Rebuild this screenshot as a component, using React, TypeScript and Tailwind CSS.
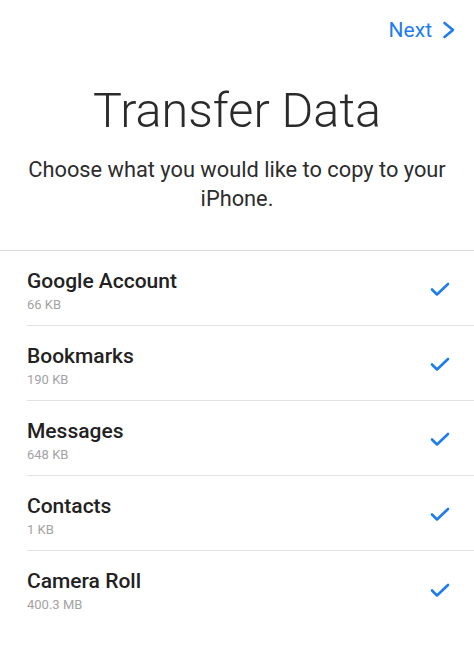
import React from 'react'

const items = [
  { name: 'Google Account', size: '66 KB' },
  { name: 'Bookmarks', size: '190 KB' },
  { name: 'Messages', size: '648 KB' },
  { name: 'Contacts', size: '1 KB' },
  { name: 'Camera Roll', size: '400.3 MB' },
]

function Check() {
  return (
    <svg width="20" height="16" viewBox="0 0 20 16" fill="none" className="shrink-0">
      <path d="M2 7.5 L7 12.5 L18 2" stroke="#1e7cf0" strokeWidth="2.6" strokeLinecap="round" strokeLinejoin="round" />
    </svg>
  )
}

export default function App() {
  return (
    <div className="w-[474px] h-[647px] bg-white overflow-hidden" style={{ fontFamily: 'Roboto, "Noto Sans", sans-serif' }}>
      {/* Top bar */}
      <div className="h-[60px] flex items-center justify-end pr-[18px]">
        <button className="flex items-center gap-[10px] text-[21px] text-[#1e7cf0] leading-none">
          <span>Next</span>
          <svg width="14" height="18" viewBox="0 0 14 18" fill="none">
            <path d="M2.5 2 L11 9 L2.5 16" stroke="#1e7cf0" strokeWidth="2.6" strokeLinecap="round" strokeLinejoin="round" />
          </svg>
        </button>
      </div>

      {/* Heading */}
      <h1 className="mt-[21px] text-center text-[48.5px] font-light leading-[60px] text-[#2b2b2b]">
        Transfer Data
      </h1>
      <p className="mt-[14px] px-[20px] text-center text-[21.8px] leading-[29px] text-[#2d2d2d]">
        Choose what you would like to copy to your iPhone.
      </p>

      {/* Items */}
      <div className="mt-[37px] border-t border-[#dcdcdc]">
        {items.map((item, i) => (
          <div key={item.name} className="pl-[27px]">
            <div
              className={
                'flex items-center justify-between pr-[24px] pt-[4px] h-[75px] ' +
                (i < items.length - 1 ? 'border-b border-[#e2e2e2]' : '')
              }
            >
              <div className="flex flex-col">
                <span className="text-[21px] font-medium leading-[26px] text-[#222]">{item.name}</span>
                <span className="mt-[3px] text-[13px] leading-[16px] text-[#a3a3a3]">{item.size}</span>
              </div>
              <Check />
            </div>
          </div>
        ))}
      </div>
    </div>
  )
}
